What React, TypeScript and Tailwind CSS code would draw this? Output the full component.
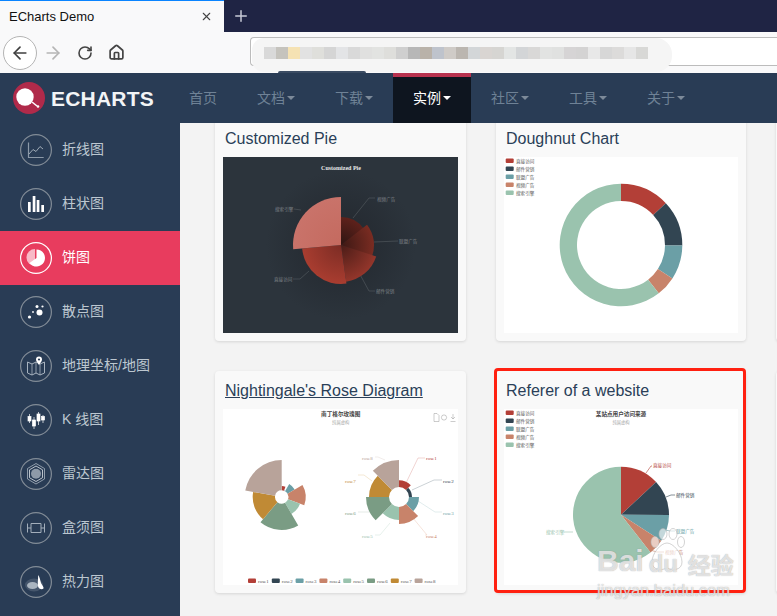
import { ReactNode } from "react";
import { ArrowLeft, ArrowRight, House, Plus, RotateCw, X } from "lucide-react";

const CJK = '"Noto Sans CJK SC", sans-serif';
const SERIF = '"Liberation Serif", "Noto Sans CJK SC", serif';
const PIE_COLORS = ["#b33f37", "#324552", "#6b9fa6", "#c8836a", "#9ac3ae"];
const ROSE_COLORS = ["#b33f37", "#324552", "#6b9fa6", "#c8836a", "#9ac3ae", "#7a9c84", "#c08a35", "#b8a39a"];
const PIE_NAMES = ["直接访问", "邮件营销", "联盟广告", "视频广告", "搜索引擎"];
const PIE_ANGLES = [0, 47, 90.5, 123, 142, 360];

// angle is clockwise from 12 o'clock
function pt(cx: number, cy: number, r: number, deg: number) {
  const a = ((deg - 90) * Math.PI) / 180;
  return `${(cx + r * Math.cos(a)).toFixed(2)} ${(cy + r * Math.sin(a)).toFixed(2)}`;
}

function sector(cx: number, cy: number, r0: number, r: number, a0: number, a1: number) {
  const large = a1 - a0 > 180 ? 1 : 0;
  return `M${pt(cx, cy, r, a0)} A${r} ${r} 0 ${large} 1 ${pt(cx, cy, r, a1)} L${pt(cx, cy, r0, a1)} A${r0} ${r0} 0 ${large} 0 ${pt(cx, cy, r0, a0)} Z`;
}

function Legend() {
  return (
    <g>
      {PIE_NAMES.map((name, i) => (
        <g key={name}>
          <rect x={1.7} y={1.4 + i * 8} width={8} height={4.6} rx={1} fill={PIE_COLORS[i]} />
          <text x={12} y={5.7 + i * 8} fontSize={4.6} fill="#555" fontFamily={SERIF}>{name}</text>
        </g>
      ))}
    </g>
  );
}

function CustomPie() {
  const slices = [
    { r: 28, a0: 0, a1: 55, from: "#2e1512", to: "#5e211b" },
    { r: 33, a0: 52, a1: 110, from: "#3c1814", to: "#7a2c22" },
    { r: 37, a0: 108, a1: 172, from: "#4a1c17", to: "#94362b" },
    { r: 39, a0: 172, a1: 265, from: "#7c2c24", to: "#a93d30" },
    { r: 48, a0: 265, a1: 360, from: "#c46a5f", to: "#c9736a" },
  ];
  return (
    <svg viewBox="0 0 235 176" className="block h-full w-full bg-[#2c343c]">
      <defs>
        <radialGradient id="glow" gradientUnits="userSpaceOnUse" cx="118" cy="88" r="75">
          <stop offset="0.4" stopColor="#262c33" />
          <stop offset="1" stopColor="#2c343c" />
        </radialGradient>
        {slices.map((s, i) => (
          <radialGradient key={i} id={`s${i}`} gradientUnits="userSpaceOnUse" cx="118" cy="88" r={s.r}>
            <stop offset="0" stopColor={s.from} />
            <stop offset="1" stopColor={s.to} />
          </radialGradient>
        ))}
      </defs>
      <circle cx={118} cy={88} r={75} fill="url(#glow)" />
      <text x={118} y={13} fontSize={6} fontWeight="bold" textAnchor="middle" fill="#e8e8e8" fontFamily={SERIF}>Customized Pie</text>
      <g fill="none" stroke="#565c62" strokeWidth={0.6}>
        <path d="M130 61 L146 41 L152 41" />
        <path d="M151 85 L175 84" />
        <path d="M134 112 L146 134 L152 134" />
        <path d="M71 52 L78 53" />
        <path d="M70 122 L77 122 L86 114" />
      </g>
      {slices.map((s, i) => (
        <path key={i} d={sector(118, 88, 0, s.r, s.a0, s.a1)} fill={`url(#s${i})`} />
      ))}
      <g fontSize={4.6} fill="#7f8388" fontFamily={SERIF}>
        <text x={154} y={43.500}>视频广告</text>
        <text x={176} y={85.500}>联盟广告</text>
        <text x={153} y={135.500}>邮件营销</text>
        <text x={52} y={54}>搜索引擎</text>
        <text x={51} y={124}>直接访问</text>
      </g>
    </svg>
  );
}

function Doughnut() {
  return (
    <svg viewBox="0 0 234 176" className="block h-full w-full bg-white">
      <Legend />
      {PIE_COLORS.map((c, i) => (
        <path key={c} d={sector(117, 88, 44, 61.3, PIE_ANGLES[i], PIE_ANGLES[i + 1])} fill={c} />
      ))}
    </svg>
  );
}

function Rose() {
  const leftAngles = [0, 20, 30, 60, 110, 150, 220, 280, 360];
  const leftRadius = [11, 7, 15, 24, 19.5, 33, 29, 37];
  const rightRadius = [16.7, 13, 20, 27, 23, 33, 30, 37];
  return (
    <svg viewBox="0 0 235 176" className="block h-full w-full bg-white">
      <text x={117.7} y={7} fontSize={5.6} fontWeight="bold" textAnchor="middle" fill="#444" fontFamily={SERIF}>南丁格尔玫瑰图</text>
      <text x={117.7} y={15} fontSize={4.3} textAnchor="middle" fill="#aaa" fontFamily={SERIF}>纯属虚构</text>
      <g fill="none" stroke="#999" strokeWidth={0.5}>
        <path d="M211 4.5h3l2 2v6h-5z" />
        <circle cx={221} cy={8.5} r={2.6} />
        <path d="M230 5v5M228 8l2 2 2-2M227.5 12.5h5" />
      </g>
      {ROSE_COLORS.map((c, i) => (
        <path key={c} d={sector(58.7, 88, 6.7, leftRadius[i], leftAngles[i], leftAngles[i + 1])} fill={c} />
      ))}
      <g fill="none" strokeWidth={0.5}>
        <path d="M183 74 L195 49 L202 49" stroke="#e0a8a4" />
        <path d="M189 81 L211 71 L219 71" stroke="#99a4ac" />
        <path d="M195 92 L212 103 L219 103" stroke="#c2d8db" />
        <path d="M190 109 L204 126 L202 126" stroke="#ecc8b9" />
        <path d="M167 114 L157 126 L152 126" stroke="#cfe3d9" />
        <path d="M148 103 L135 103" stroke="#c9d6cc" />
        <path d="M149 72 L141 66 L135 66" stroke="#e8d0a8" />
        <path d="M162 51 L155 48 L152 48" stroke="#e3d9d5" />
      </g>
      {ROSE_COLORS.map((c, i) => (
        <path key={c} d={sector(176, 88, 10, rightRadius[i], i * 45, (i + 1) * 45)} fill={c} />
      ))}
      <g fontSize={5} fontFamily={SERIF}>
        {[
          ["rose1", 203, 50.500],
          ["rose2", 220, 73.500],
          ["rose3", 220, 105.500],
          ["rose4", 203, 128.500],
          ["rose5", 139, 128.500],
          ["rose6", 122, 105.500],
          ["rose7", 122, 73.500],
          ["rose8", 139, 50.500],
        ].map(([t, x, y], i) => (
          <text key={t as string} x={x as number} y={y as number} fill={ROSE_COLORS[i]}>{t as string}</text>
        ))}
      </g>
      {ROSE_COLORS.map((c, i) => (
        <g key={c}>
          <rect x={25 + i * 23.8} y={169.5} width={8} height={4.6} rx={1} fill={c} />
          <text x={35 + i * 23.8} y={173.6} fontSize={5} fill="#555" fontFamily={SERIF}>{`rose${i + 1}`}</text>
        </g>
      ))}
    </svg>
  );
}

function RefererPie() {
  return (
    <svg viewBox="0 0 234 176" className="block h-full w-full bg-white">
      <Legend />
      <text x={117} y={7} fontSize={5.6} fontWeight="bold" textAnchor="middle" fill="#444" fontFamily={SERIF}>某站点用户访问来源</text>
      <text x={117} y={15} fontSize={4.3} textAnchor="middle" fill="#aaa" fontFamily={SERIF}>纯属虚构</text>
      {PIE_COLORS.map((c, i) => (
        <path key={c} d={sector(117, 105.7, 0, 48, PIE_ANGLES[i], PIE_ANGLES[i + 1])} fill={c} />
      ))}
      <g fill="none" strokeWidth={0.6}>
        <path d="M142 64 L147 57 L148 57" stroke={PIE_COLORS[0]} />
        <path d="M162 88 L167 86 L171 86" stroke={PIE_COLORS[1]} />
        <path d="M161 121 L166 122 L171 122" stroke={PIE_COLORS[2]} />
        <path d="M146 141 L153 143 L160 143" stroke={PIE_COLORS[3]} />
        <path d="M69 123 L64 123 L60 123" stroke={PIE_COLORS[4]} />
      </g>
      <g fontSize={4.6} fontFamily={SERIF}>
        <text x={149} y={58} fill={PIE_COLORS[0]}>直接访问</text>
        <text x={172} y={88} fill={PIE_COLORS[1]}>邮件营销</text>
        <text x={172} y={124} fill={PIE_COLORS[2]}>联盟广告</text>
        <text x={161} y={145} fill={PIE_COLORS[3]}>视频广告</text>
        <text x={42} y={125} fill={PIE_COLORS[4]}>搜索引擎</text>
      </g>
    </svg>
  );
}

function Card({ title, link, top, children }: { title: string; link?: boolean; top?: boolean; children: ReactNode }) {
  return (
    <div className={`bg-[#f9f9f9] px-2 pb-2 shadow-[0_1px_3px_rgba(0,0,0,0.12)] ${top ? "rounded-b" : "rounded"}`}>
      <div className={`flex h-[38px] items-center pl-[2px] pt-[2px] text-base text-[#2a3f58] ${link ? "underline" : ""}`}>
        {title}
      </div>
      <div className="h-[176px]">{children}</div>
    </div>
  );
}

const ring = "fill-none stroke-[#828c97] stroke-[1.2]";

function SideIcon({ kind }: { kind: string }) {
  return (
    <svg viewBox="0 0 32 32" className="h-8 w-8 shrink-0">
      <circle cx={16} cy={16} r={15.4} className={kind === "pie" ? "fill-none stroke-white stroke-[1.2]" : ring} />
      {kind === "line" && (
        <g fill="none" strokeLinejoin="round">
          <path d="M8.5 8.5V23.5H23.7" stroke="#8c99a8" strokeWidth={1.2} />
          <path d="M9 20l4-4.5 3 2 4-5 3 2.5" stroke="#aab5c0" strokeWidth={0.9} />
        </g>
      )}
      {kind === "bar" && (
        <g fill="#fff">
          <rect x={8} y={14} width={2.7} height={10} />
          <rect x={12.7} y={8} width={2.7} height={16} />
          <rect x={16.7} y={12} width={2.7} height={12} />
          <rect x={21.3} y={17} width={2.7} height={7} />
        </g>
      )}
      {kind === "pie" && (
        <g>
          <path d={sector(15, 15.5, 0, 8.5, 180, 360)} fill="#f8b9c6" />
          <path d={sector(16.5, 16, 0, 8.5, 0, 235)} fill="#fff" />
        </g>
      )}
      {kind === "scatter" && (
        <g fill="#fff">
          <circle cx={19.5} cy={16.5} r={3} />
          <circle cx={9.5} cy={21} r={1.6} />
          <circle cx={13} cy={16} r={0.9} />
          <circle cx={17} cy={10.5} r={1.5} />
          <circle cx={22.5} cy={10.5} r={1.1} />
        </g>
      )}
      {kind === "map" && (
        <g>
          <path d="M7.5 12l4.5 2 4-2 4 2 4.5-2v11l-4.5 2-4-2-4 2-4.5-2z" fill="none" stroke="#a8b3bf" strokeWidth={1} />
          <path d="M12 14v11M20 14v11M16 12v11" stroke="#a8b3bf" strokeWidth={0.8} />
          <path d="M19 15c-2-3-3-4-3-5.500a3 3 0 0 1 6 0c0 1.500-1 2.500-3 5.500z" fill="#fff" />
          <circle cx={19} cy={9.5} r={1.1} fill="#293c55" />
        </g>
      )}
      {kind === "kline" && (
        <g stroke="#fff" strokeWidth={0.7} fill="#fff">
          <path d="M9.500 10v9M14 13v12M18.500 8v13M23 11v8" />
          <rect x={8} y={12.500} width={3} height={4.500} />
          <rect x={12.500} y={16} width={3} height={6} />
          <rect x={17} y={10} width={3} height={7} />
          <rect x={21.500} y={12.500} width={3} height={3.500} />
        </g>
      )}
      {kind === "radar" && (
        <g fill="none">
          <path d="M16 5.500l8.500 5V21l-8.500 5-8.500-5V10.500z" stroke="#aab5c0" strokeWidth={0.8} />
          <path d="M16 8l6.500 3.800v7.900L16 23.500l-6.500-3.800v-7.900z" stroke="#dfe4ea" strokeWidth={0.8} />
          <circle cx={16} cy={15.800} r={5} fill="#8e9aa8" />
        </g>
      )}
      {kind === "box" && (
        <g fill="none" stroke="#a3aebb" strokeWidth={1}>
          <path d="M7.500 11.500v9M7.500 16h3.500M11 11.500h10v9H11zM21 16h3.500M24.500 11.500v9" />
        </g>
      )}
      {kind === "heat" && (
        <g>
          <ellipse cx={14} cy={19} rx={9} ry={6.500} fill="#45566c" />
          <ellipse cx={12.500} cy={19.500} rx={5.500} ry={3.500} fill="#aab5c0" />
          <path d="M18 9c2 2 2 5 3 8 1 2 3 4 2.500 5.500-1.500 1.500-4 .5-5-1-1.500-3 0-9-.5-12.500z" fill="#fff" />
        </g>
      )}
    </svg>
  );
}

const SIDE_ITEMS = [
  { kind: "line", label: "折线图" },
  { kind: "bar", label: "柱状图" },
  { kind: "pie", label: "饼图" },
  { kind: "scatter", label: "散点图" },
  { kind: "map", label: "地理坐标/地图" },
  { kind: "kline", label: "K 线图" },
  { kind: "radar", label: "雷达图" },
  { kind: "box", label: "盒须图" },
  { kind: "heat", label: "热力图" },
];

const NAV_ITEMS = [
  { label: "首页" },
  { label: "文档", caret: true },
  { label: "下载", caret: true },
  { label: "实例", caret: true, active: true },
  { label: "社区", caret: true },
  { label: "工具", caret: true },
  { label: "关于", caret: true },
];

const MOSAIC = [
  "#d9d9d9", "#c5c3bd", "#f5e2b3", "#e2e2e2", "#dfdfdb", "#d5d5d5", "#e3e4e6", "#d9d9d9", "#e0e0df", "#e2e3e1", "#dededb",
  "#cfcfcf", "#b7b7b7", "#b9b2a9", "#bec3cc", "#cfcbc7", "#bbb6b0", "#d3d6d8", "#d9d5d2", "#d6d5d2", "#e3e5e4", "#d3d5d7",
  "#d9d8d7", "#e2e3e2", "#e0e1e0", "#d6d4d5", "#d4d3d3", "#e8e8e8", "#d7d7d7", "#dcdbda", "#e6e6e6", "#d8d8d6",
];

export default function App() {
  return (
    <div className="relative flex h-[616px] w-full flex-col overflow-hidden bg-[#f3f3f3] font-['Liberation_Sans','Noto_Sans_CJK_SC',sans-serif]">
      {/* browser chrome */}
      <div className="flex h-8 shrink-0 items-stretch bg-[#1f2444]">
        <div className="flex w-[224px] items-center justify-between border-t border-[#0a84ff] bg-[#f9f9fa] pl-[9px] pr-[11px] text-[13px] text-[#111]">
          ECharts Demo
          <X size={13} strokeWidth={2} className="text-[#444]" />
        </div>
        <div className="flex w-[34px] items-center justify-center text-[#c8cad6]">
          <Plus size={18} strokeWidth={2} />
        </div>
      </div>
      <div className="relative flex h-[41px] shrink-0 items-center bg-[#f9f9fa] pl-[3px]">
        <div className="flex h-[34px] w-[34px] items-center justify-center rounded-full border border-[#b4b4b4] bg-white">
          <ArrowLeft size={20} strokeWidth={2} className="text-[#3f3f3f]" />
        </div>
        <ArrowRight size={20} strokeWidth={2} className="ml-[6px] text-[#b5b5b5]" />
        <RotateCw size={16} strokeWidth={2.4} className="ml-[14px] text-[#444]" />
        <House size={17} strokeWidth={2.4} className="ml-[15px] text-[#444]" />
        <div className="absolute left-[250px] right-0 top-[5px] h-[29px] rounded-l-sm border border-r-0 border-[#bcbcbc] bg-white" />
        {/* blurred address */}
        <div className="absolute left-[252px] top-[6px] h-[34px] w-[420px] rounded-l-xl rounded-r-2xl bg-[#f5f5f5] pl-3 pt-[9px]">
          <div className="flex h-3">
            {MOSAIC.map((c, i) => (
              <div key={i} className="h-3 w-3" style={{ backgroundColor: c }} />
            ))}
          </div>
        </div>
        <div className="absolute bottom-0 left-[278px] h-[2px] w-[88px] rounded-t bg-[#3b4c63]" />
      </div>
      {/* site nav */}
      <div className="flex h-[50px] shrink-0 items-stretch bg-[#293c55]">
        <div className="flex w-[169px] items-center pl-[13px]">
          <svg viewBox="0 0 32 32" className="h-8 w-8 shrink-0">
            <circle cx={16} cy={16} r={16} fill="#b02a4a" />
            <circle cx={12} cy={15} r={8.700} fill="#fff" />
            <path d="M19 20l5 4" stroke="#fff" strokeWidth={1.600} />
            <circle cx={25} cy={24.500} r={1.300} fill="#fff" />
          </svg>
          <span className="ml-[6px] text-[21px] font-bold leading-none tracking-[0.2px] text-[#f2f4f6]">ECHARTS</span>
        </div>
        {NAV_ITEMS.map((item) => (
          <div
            key={item.label}
            className={`flex items-center border-t-4 px-5 pb-[4px] text-sm ${item.active ? "border-[#b8324f] bg-[#0e151f] text-white" : "border-transparent text-[#6f8296]"}`}
          >
            {item.label}
            {item.caret && (
              <span className={`ml-[2px] h-0 w-0 border-x-4 border-t-4 border-x-transparent ${item.active ? "border-t-white" : "border-t-[#7d8a99]"}`} />
            )}
          </div>
        ))}
      </div>
      <div className="flex min-h-0 flex-1">
        <aside className="w-[180px] shrink-0 bg-[#293c55]">
          {SIDE_ITEMS.map((item) => (
            <div
              key={item.kind}
              className={`flex h-[54px] items-center gap-[10px] pl-5 text-sm ${item.kind === "pie" ? "bg-[#e83c5e] text-white" : "text-[#bcc7d0]"}`}
            >
              <SideIcon kind={item.kind} />
              <span className="mb-[2px]">{item.label}</span>
            </div>
          ))}
        </aside>
        <main className="relative min-w-0 flex-1 overflow-hidden pl-[35px]">
          <div className="-mt-1 grid w-[800px] grid-cols-[251px_250px_251px] gap-[30px]">
            <Card title="Customized Pie" top>
              <CustomPie />
            </Card>
            <Card title="Doughnut Chart" top>
              <Doughnut />
            </Card>
            <Card title="" top>
              <div />
            </Card>
            <Card title="Nightingale's Rose Diagram" link>
              <Rose />
            </Card>
            <div className="relative">
              <Card title="Referer of a website">
                <RefererPie />
              </Card>
              <div className="absolute -left-[2px] -top-[3px] bottom-0 right-0 rounded border-[3px] border-[#ff2010]" />
            </div>
            <Card title="">
              <div />
            </Card>
          </div>
          {/* baidu watermark */}
          <div className="absolute left-[417px] top-[423px] flex w-[150px] flex-col text-white/70 [text-shadow:0_0_1px_rgba(130,130,130,0.8)]">
            <div className="flex items-end leading-none">
              <span className="text-[30px] font-bold">Bai</span>
              <span className="relative ml-[5px] w-[34px] text-[24px] font-bold">
                <svg viewBox="0 0 36 44" className="absolute -top-[24px] left-0 h-[44px] w-[36px]" fill="#ffffff" fillOpacity={0.6} stroke="#b5b5b5" strokeWidth={0.6}>
                  <ellipse cx={6} cy={14} rx={4} ry={5.500} />
                  <ellipse cx={14} cy={6} rx={4} ry={5.500} />
                  <ellipse cx={24} cy={6} rx={4} ry={5.500} />
                  <ellipse cx={32} cy={14} rx={3.500} ry={5.500} />
                  <path d="M18 15c6 0 15 10 15 19 0 8-9 9-15 6-6 3-15 2-15-6 0-9 9-19 15-19z" />
                </svg>
                <span className="relative">du</span>
              </span>
              <span className="ml-[5px] text-[23px] font-bold" style={{ fontFamily: CJK }}>经验</span>
            </div>
            <div className="mt-[6px] text-[16.500px] leading-none">jingyan.baidu.com</div>
          </div>
        </main>
      </div>
    </div>
  );
}
